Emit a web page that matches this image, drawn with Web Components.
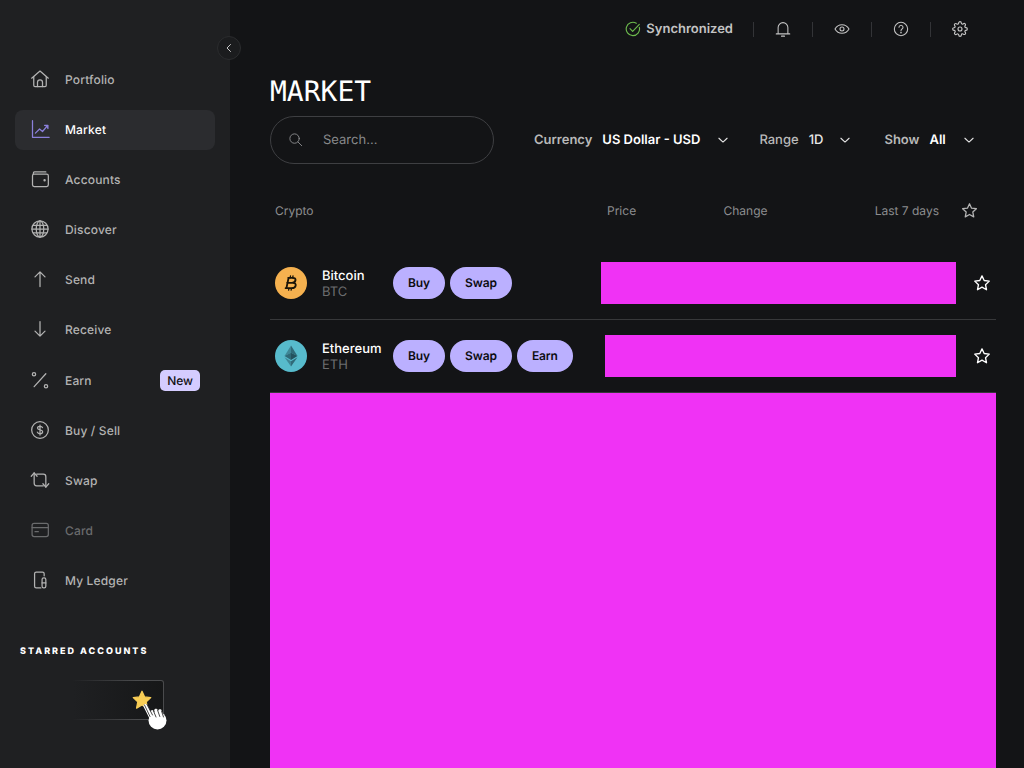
<!DOCTYPE html>
<html lang="en"><head><meta charset="utf-8"><title>Market</title>
<style>
html,body{margin:0;height:100%;overflow:hidden;background:#131416;font-family:Inter,"Liberation Sans",sans-serif;text-rendering:geometricPrecision}
</style></head><body>
<ledger-app></ledger-app>
<script>
const ICONS={
home:'<path d="M2 11 12 2.500 22 11"/><path d="M4.500 9v10.500a1.500 1.500 0 0 0 1.500 1.500h12a1.500 1.500 0 0 0 1.500-1.500V9"/><path d="M9 21v-5a3 3 0 0 1 6 0v5"/>',
chart:'<path d="M3 2v20h20"/><path d="M6.500 17l5-5 3.500 3 6-7"/><path d="M17.500 7.500h4v4" fill="currentColor"/>',
wallet:'<path d="M4 5.500V5a1.500 1.500 0 0 1 1.500-1.500H19"/><rect x="3" y="6" width="19" height="15" rx="2"/><circle cx="17.500" cy="13.500" r=".7" fill="currentColor"/>',
globe:'<circle cx="12" cy="12" r="9.700"/><ellipse cx="12" cy="12" rx="4.500" ry="9.700"/><path d="M2.300 12h19.400M3.600 7.500h16.800M3.600 16.500h16.800M12 2.300v19.400"/>',
up:'<path d="M12 21V3.500M6 9.500l6-6 6 6"/>',
down:'<path d="M12 3v17.500M6 14.500l6 6 6-6"/>',
percent:'<path d="M5 20 19 4.500"/><circle cx="4.800" cy="5" r="2"/><circle cx="19.200" cy="19.500" r="2"/>',
dollar:'<circle cx="12" cy="12" r="10"/><path d="M15 9.200c-.3-1.100-1.500-1.700-3-1.700-1.800 0-3 .9-3 2.200 0 3 6.200 1.500 6.200 4.500 0 1.300-1.300 2.300-3.200 2.300-1.600 0-2.800-.7-3.200-1.900M12 6v12"/>',
swap:'<path d="M5 3.500V16a3 3 0 0 0 3 3h8"/><path d="M1.500 7.500 5 3.500l3.500 4"/><path d="M19 20.500V8a3 3 0 0 0-3-3H8"/><path d="M15.500 16.500l3.500 4 3.500-4"/>',
card:'<rect x="2.500" y="4" width="19.500" height="16" rx="2.500"/><path d="M2.500 9h19.500M6 14h4"/>',
ledger:'<path d="M13 21.500H7.500A2 2 0 0 1 5.500 19.500V4.500a2 2 0 0 1 2-2H15a2 2 0 0 1 2 2V7"/><rect x="14.500" y="9.500" width="4.500" height="12" rx="2"/><path d="M14.500 15.500H19"/>',
bell:'<path d="M5.500 18V10a6.500 6.500 0 0 1 13 0v8"/><path d="M3 18.500h18M10 21.500h4"/>',
eye:'<path d="M1.500 12C4 7.500 7.800 5.500 12 5.500s8 2 10.500 6.500c-2.500 4.500-6.300 6.500-10.500 6.500S4 16.500 1.500 12Z"/><circle cx="12" cy="12" r="3"/>',
help:'<circle cx="12" cy="12" r="10"/><path d="M9 9.500a3 3 0 1 1 4.500 2.600c-1 .6-1.500 1.200-1.500 2.400"/><circle cx="12" cy="17.300" r=".5" fill="currentColor"/>',
gear:'<circle cx="12" cy="12" r="3"/><path d="M19.400 15a1.650 1.650 0 0 0 .33 1.820l.06.06a2 2 0 0 1 0 2.830 2 2 0 0 1-2.830 0l-.06-.06a1.650 1.650 0 0 0-1.820-.33 1.650 1.650 0 0 0-1 1.510V21a2 2 0 0 1-2 2 2 2 0 0 1-2-2v-.09A1.650 1.650 0 0 0 9 19.400a1.650 1.650 0 0 0-1.820.33l-.06.06a2 2 0 0 1-2.830 0 2 2 0 0 1 0-2.830l.06-.06a1.650 1.650 0 0 0 .33-1.820 1.650 1.650 0 0 0-1.510-1H3a2 2 0 0 1-2-2 2 2 0 0 1 2-2h.09A1.650 1.650 0 0 0 4.600 9a1.650 1.650 0 0 0-.33-1.820l-.06-.06a2 2 0 0 1 0-2.830 2 2 0 0 1 2.830 0l.06.06a1.650 1.650 0 0 0 1.820.33H9a1.650 1.650 0 0 0 1-1.510V3a2 2 0 0 1 2-2 2 2 0 0 1 2 2v.09a1.650 1.650 0 0 0 1 1.510 1.650 1.650 0 0 0 1.820-.33l.06-.06a2 2 0 0 1 2.830 0 2 2 0 0 1 0 2.830l-.06.06a1.650 1.650 0 0 0-.33 1.820V9a1.650 1.650 0 0 0 1.510 1H21a2 2 0 0 1 2 2 2 2 0 0 1-2 2h-.09a1.650 1.650 0 0 0-1.510 1z"/>',
search:'<circle cx="10.500" cy="10.500" r="7.500"/><path d="m16 16 6 6"/>',
chev:'<path d="m5 9 7 6.500L19 9"/>',
chevl:'<path d="M15 5l-7 7 7 7"/>',
star:'<path d="M12 2.500l2.900 6.200 6.800.8-5 4.700 1.300 6.800-6-3.400-6 3.400 1.300-6.800-5-4.700 6.800-.8Z"/>',
check:'<path d="M21.500 9.500A10 10 0 1 1 17 3.400"/><path d="m7.500 11.500 4 4L21.500 5"/>'
};
const icon=(n,s,sw=1.6)=>`<svg width="${s}" height="${s}" viewBox="0 0 24 24" fill="none" stroke="currentColor" stroke-width="${sw}" stroke-linecap="round" stroke-linejoin="round" style="display:block;flex:none">${ICONS[n]}</svg>`;
function def(name,css,html){
  customElements.define(name,class extends HTMLElement{
    connectedCallback(){
      if(this.shadowRoot)return;
      const r=this.attachShadow({mode:'open'});
      r.innerHTML=`<style>${css}</style>`+(typeof html==='function'?html(this):html);
    }
  });
}
def('nav-item',`
:host{display:flex;align-items:center;box-sizing:border-box;height:40px;margin:0 15px 10px;padding:0 15px 2px;border-radius:8px;color:#b3b3b3;font-size:12px;font-weight:500;letter-spacing:.16px}
:host([active]){background:#2b2c2f;color:#fff}
:host([active]) .i{color:#8b80db}
:host([dim]){color:#6a6b6d}
:host([tall]){height:42px;margin-bottom:9px}
.i{width:20px;display:flex;justify-content:center;margin-right:15px}
.t{flex:1}
.b{background:#d4ccff;color:#111;font-size:12px;font-weight:500;letter-spacing:0;height:21px;line-height:21px;padding:0 7px;border-radius:5px;margin-top:1px}
`,h=>`<span class="i">${icon(h.getAttribute('icon'),20,1.5)}</span><span class="t"><slot></slot></span>${h.hasAttribute('badge')?`<span class="b">${h.getAttribute('badge')}</span>`:''}`);
def('starred-card',`
:host{display:block;position:relative;width:92px;height:40px;margin:22px 0 0 72px;box-sizing:border-box;border:1px solid transparent;border-radius:0 3px 3px 0;
background:linear-gradient(90deg,#1f2022,#161718) padding-box,linear-gradient(90deg,#1f2022 0,#4a4b4d 70%) border-box}
svg{position:absolute}
`,`<svg style="left:59px;top:9px" width="20" height="20" viewBox="0 0 24 24"><path d="M12 1.500l3.200 6.800 7.300.9-5.400 5.100 1.400 7.400-6.500-3.700-6.500 3.700 1.400-7.400L1.500 9.200l7.300-.9Z" fill="#f8cd55" stroke="#f8cd55" stroke-width="1.500" stroke-linejoin="round"/></svg>
<svg style="left:70px;top:21px" width="26" height="30" viewBox="0 0 26 30"><g stroke-linecap="round" fill="none"><path d="M2.500 4 8 15" stroke="#fff" stroke-width="4"/><path d="M9 10l3 6M13 8.500l2.500 6M17 9l2 6" stroke="#fff" stroke-width="3.600"/></g><circle cx="14.500" cy="18.500" r="9" fill="#fff"/><g stroke="#333" stroke-width=".9" fill="none" stroke-linecap="round"><path d="M1.500 3 7 14.500M4 2.500 9.500 13M10.500 9l2.500 6M14.500 8l2.300 6.500M18.500 9l2 6"/></g></svg>`);
def('app-sidebar',`
:host{display:flex;flex-direction:column;width:230px;flex:none;height:768px;background:#1f2022;box-sizing:border-box;padding-top:60px}
h2{margin:35px 0 0 20px;color:#fff;font-size:9px;line-height:12px;font-weight:800;letter-spacing:2px;text-transform:uppercase}
`,`<nav-item icon="home">Portfolio</nav-item>
<nav-item icon="chart" active>Market</nav-item>
<nav-item icon="wallet">Accounts</nav-item>
<nav-item icon="globe">Discover</nav-item>
<nav-item icon="up">Send</nav-item>
<nav-item icon="down">Receive</nav-item>
<nav-item icon="percent" tall badge="New">Earn</nav-item>
<nav-item icon="dollar">Buy / Sell</nav-item>
<nav-item icon="swap">Swap</nav-item>
<nav-item icon="card" dim>Card</nav-item>
<nav-item icon="ledger">My Ledger</nav-item>
<h2>Starred accounts</h2>
<starred-card></starred-card>`);
def('top-bar',`
:host{display:flex;align-items:center;justify-content:flex-end;height:58px;margin-right:-28px;padding-right:35px;color:#c4c4c4}
.s{display:flex;align-items:center;gap:5px;font-size:13px;font-weight:600;margin-right:20px}
.g{color:#6dbb4d}
.sep{width:1px;height:15px;background:#333437}
.c{width:58px;display:flex;justify-content:center}
`,`<span class="s"><span class="g">${icon('check',16,1.7)}</span>Synchronized</span>
<span class="sep"></span><span class="c">${icon('bell',18,1.4)}</span>
<span class="sep"></span><span class="c">${icon('eye',16,1.6)}</span>
<span class="sep"></span><span class="c">${icon('help',16,1.6)}</span>
<span class="sep"></span><span class="c">${icon('gear',16,1.7)}</span>`);
def('search-box',`
:host{display:flex;align-items:center;width:224px;height:48px;box-sizing:border-box;border:1px solid #3e3f42;border-radius:24px;padding-left:17px;color:#8a8b8d;font-size:13px;flex:none}
.l{margin-left:20px;color:#88898b}
svg{margin-top:-2px}
`,`${icon('search',15,1.5)}<span class="l"><slot></slot></span>`);
def('market-filter',`
:host{display:flex;align-items:center;font-size:13px;font-weight:600;color:#b9b9b9}
.v{color:#fff;margin-left:10px}
.c{color:#e4e4e4;margin-left:var(--g,15px)}
:host([light]) .v{font-weight:500;color:#e8e8e8}
:host([light]) .l{font-weight:500}
`,h=>`<span class="l">${h.getAttribute('label')}</span><span class="v"><slot></slot></span><span class="c">${icon('chev',14,1.9)}</span>`);
def('filter-row',`
:host{display:flex;align-items:center;height:48px;margin-top:6px}
.f{display:flex;align-items:center;margin-left:40px}
`,`<slot name="s"></slot><span class="f"><slot></slot></span>`);
def('table-head',`
:host{display:grid;grid-template-columns:332px 116.500px 1fr auto 40px;align-items:center;height:40px;margin-top:26px;padding:0 17px 0 5px;font-size:12px;color:#8c8d8f}
.e{display:flex;justify-content:flex-end;color:#b5b5b5;padding-right:1px}
`,`<span>Crypto</span><span>Price</span><span>Change</span><span>Last 7 days</span><span class="e">${icon('star',17,1.8)}</span>`);
def('pill-btn',`
:host{display:inline-flex;align-items:center;box-sizing:border-box;height:32px;padding:0 15px 2px;border-radius:16px;background:#bbb0ff;color:#0c0c10;font-size:12px;font-weight:600;letter-spacing:-.1px}
`,`<slot></slot>`);
def('coin-icon',`
:host{display:block;width:32px;height:32px;flex:none}
svg{display:block}
`,h=>h.getAttribute('kind')==='btc'
?`<svg width="32" height="32" viewBox="0 0 32 32"><circle cx="16" cy="16" r="16" fill="#f5b14f"/><g fill="none" stroke="#1a1408" stroke-width="1.800" stroke-linejoin="round" stroke-linecap="round"><path d="M13.200 10.800h4.600c2 0 3 1 2.700 2.500-.3 1.500-1.500 2.500-3.500 2.500h-3.300M12 15.800h6c2 0 3 1 2.700 2.700-.3 1.700-1.800 2.700-3.900 2.700h-6.200M13.600 10.800l-2.200 10.400"/><path stroke-width="1.300" d="M15.500 9l-.4 1.800M18 9l-.4 1.800M14 21.300l-.4 1.800M16.500 21.300l-.4 1.800"/></g></svg>`
:`<svg width="32" height="32" viewBox="0 0 32 32"><circle cx="16" cy="16" r="16" fill="#57bbcc"/><path d="M16 5.500 9.500 16 16 12.800Z" fill="#3f8796"/><path d="M16 5.500 22.500 16 16 12.800Z" fill="#2f6a78"/><path d="M9.500 16 16 12.800V20Z" fill="#2f6a78"/><path d="M22.500 16 16 12.800V20Z" fill="#24525e"/><path d="M9.500 17.300 16 21.300v5.200Z" fill="#3f8796"/><path d="M22.500 17.300 16 21.300v5.200Z" fill="#2f6a78"/></svg>`);
def('masked-block',`:host{display:block;background:#f032f5}`,``);
def('market-row',`
:host{display:flex;align-items:center;height:72px;padding-left:5px;border-bottom:1px solid #37383a}
.n{width:71px;margin-left:15px;padding-top:2px;font-size:13px;line-height:16px;font-weight:500;color:#fff;flex:none;white-space:nowrap}
.t{color:#6c6d6f;font-weight:400;display:block}
.p{display:flex;gap:5px;flex:none;width:var(--w)}
masked-block{height:42px;flex:1;margin-right:17px}
.s{color:#fff;margin-right:5px}
`,h=>`<coin-icon kind="${h.getAttribute('kind')}"></coin-icon><span class="n">${h.getAttribute('name')}<span class="t">${h.getAttribute('ticker')}</span></span><span class="p"><slot></slot></span><masked-block></masked-block><span class="s">${icon('star',18,1.8)}</span>`);
def('market-view',`
:host{display:block;flex:1;min-width:0;padding:0 28px 0 40px;height:768px;overflow:hidden}
h1{margin:16px 0 0;font:400 28px/36px "DejaVu Sans Mono","Liberation Mono",monospace;color:#fff;letter-spacing:0}
masked-block{height:400px}
`,`<top-bar></top-bar><h1>MARKET</h1>
<filter-row><search-box slot="s">Search...</search-box>
<market-filter label="Currency" style="--g:16px">US Dollar - USD</market-filter>
<market-filter label="Range" light style="--g:15px;margin-left:29px">1D</market-filter>
<market-filter label="Show" style="--g:16px;margin-left:32px">All</market-filter></filter-row>
<table-head></table-head>
<market-row style="margin-top:17px;--w:208px" kind="btc" name="Bitcoin" ticker="BTC"><pill-btn>Buy</pill-btn><pill-btn>Swap</pill-btn></market-row>
<market-row style="--w:212px" kind="eth" name="Ethereum" ticker="ETH"><pill-btn>Buy</pill-btn><pill-btn>Swap</pill-btn><pill-btn>Earn</pill-btn></market-row>
<masked-block></masked-block>`);
def('collapse-btn',`
:host{position:absolute;left:217px;top:36px;width:24px;height:24px;box-sizing:border-box;border-radius:50%;background:#1b1c1e;border:1px solid #2b2c2e;display:flex;align-items:center;justify-content:center;color:#c8c8c8}
`,icon('chevl',12,2));
def('ledger-app',`
:host{display:flex;position:relative;width:1024px;height:768px;overflow:hidden;color:#fff}
`,`<app-sidebar></app-sidebar><market-view></market-view><collapse-btn></collapse-btn>`);
</script>
</body></html>
